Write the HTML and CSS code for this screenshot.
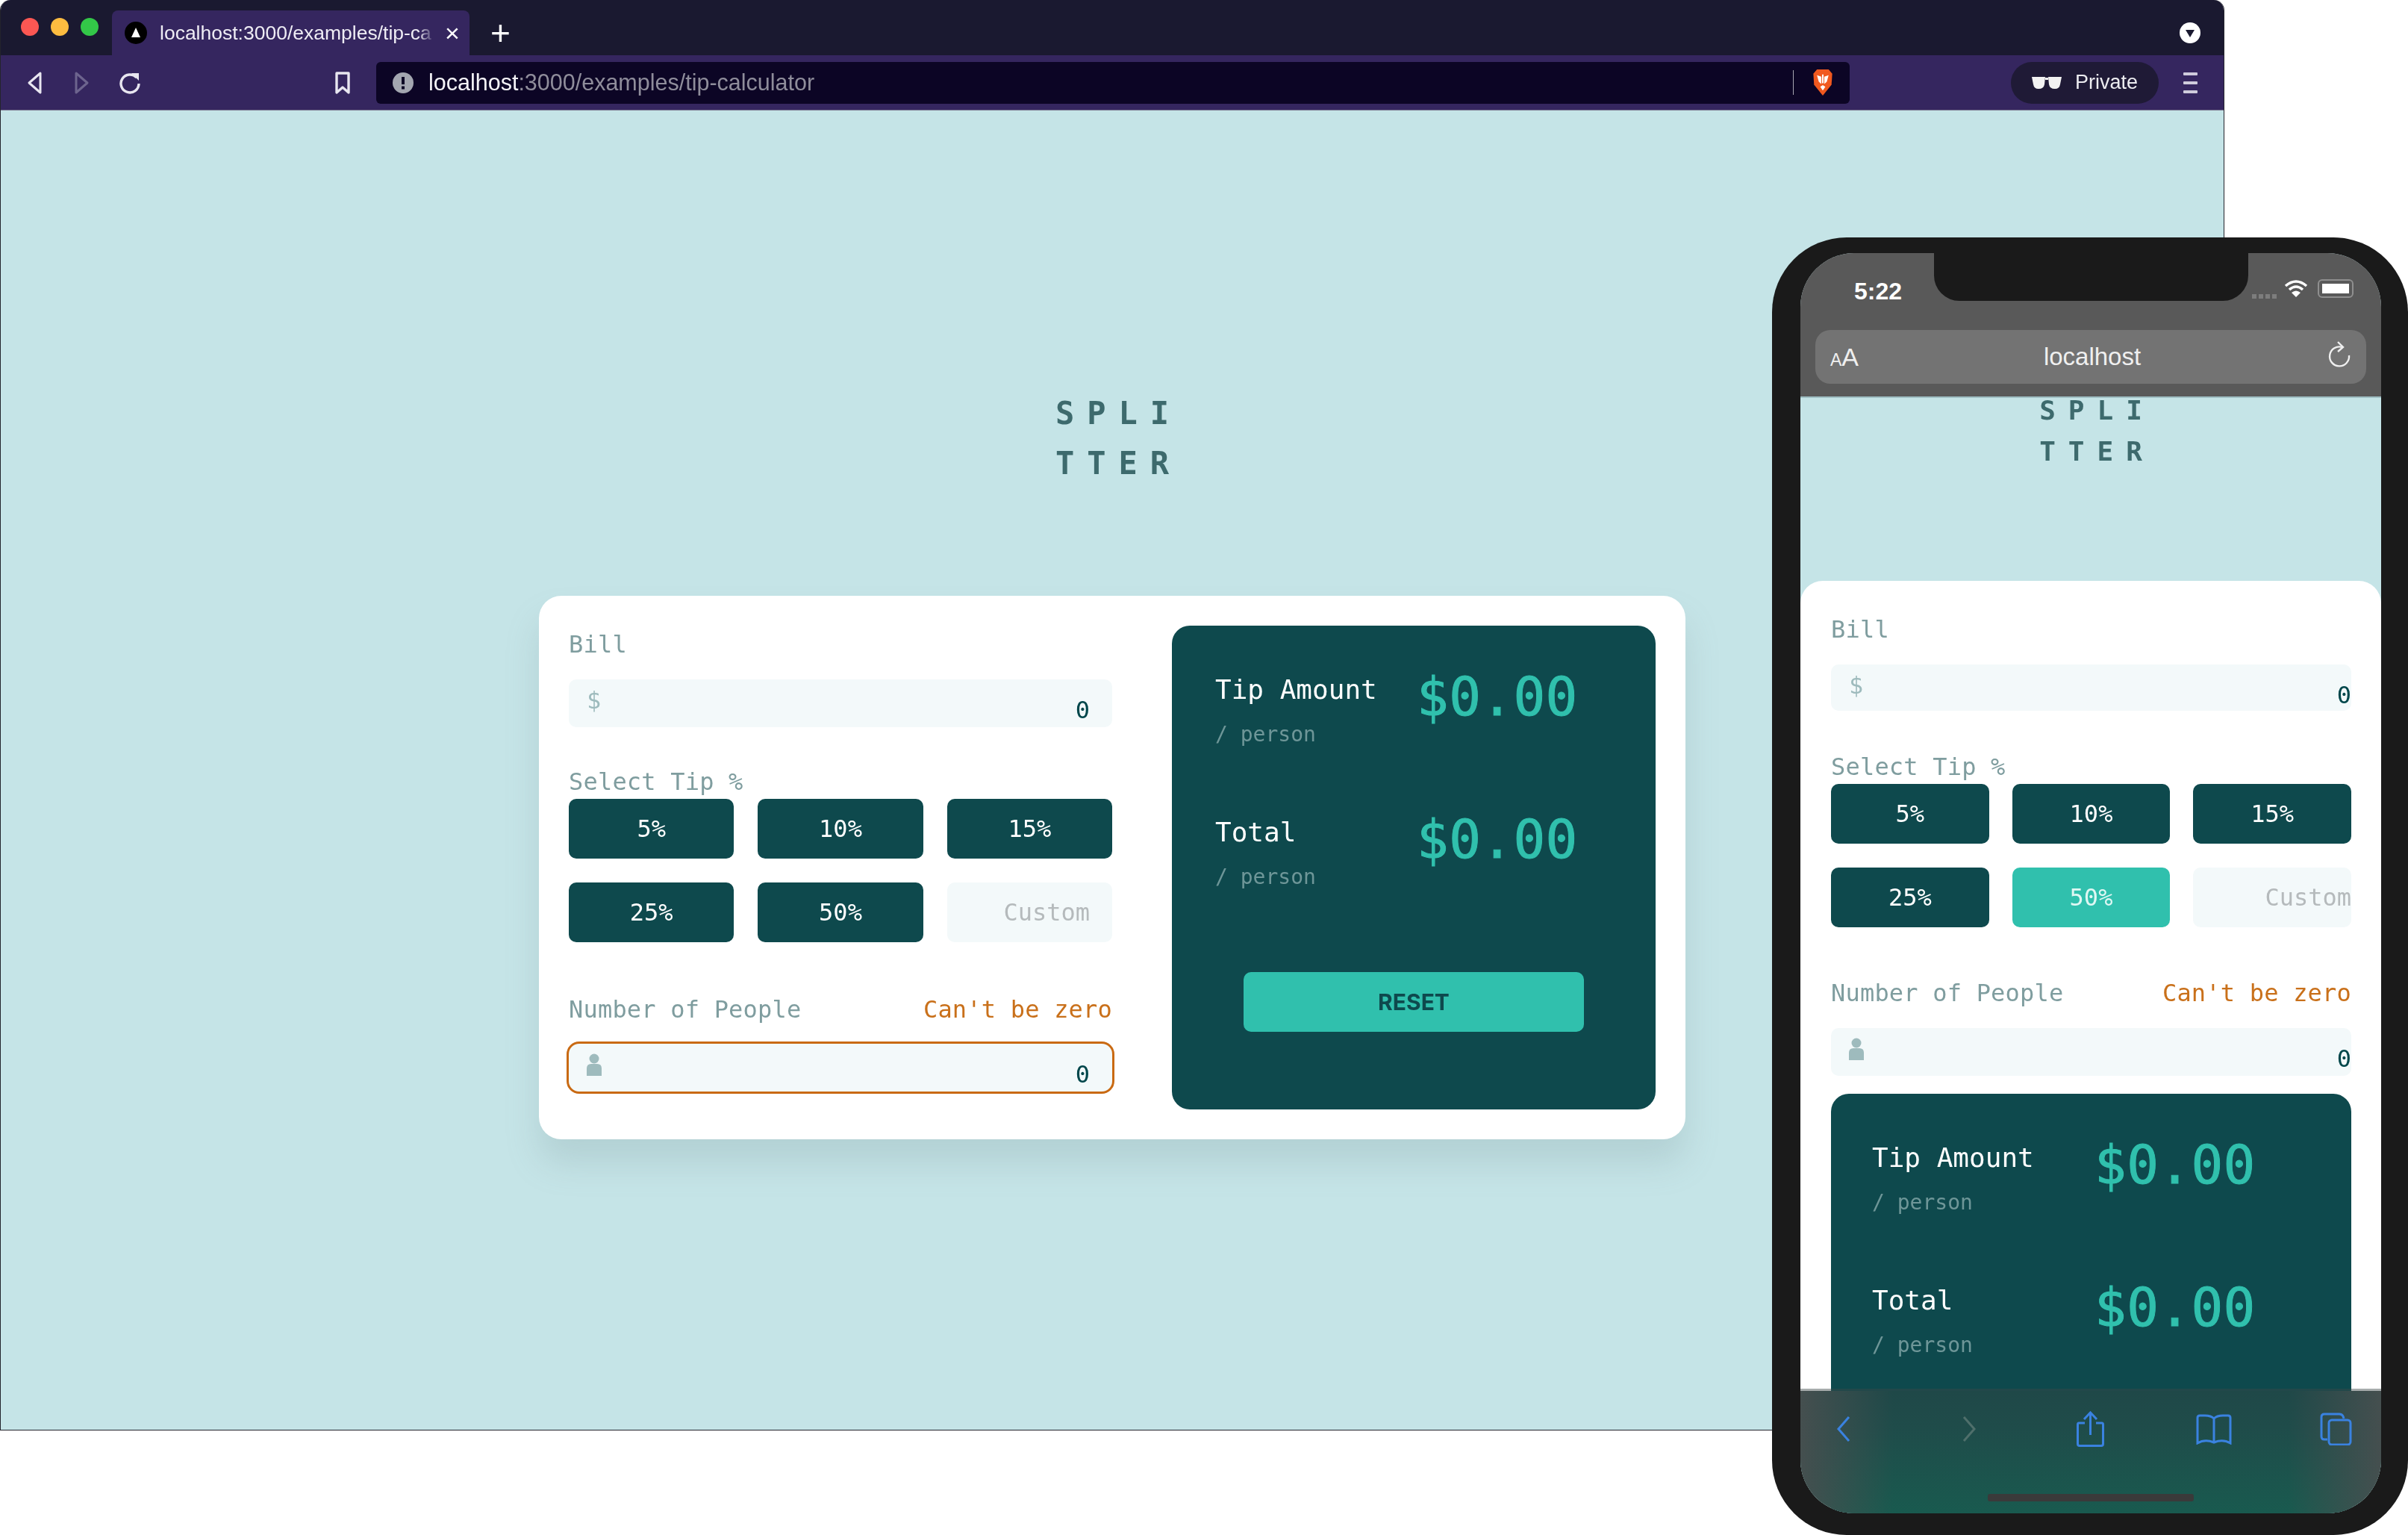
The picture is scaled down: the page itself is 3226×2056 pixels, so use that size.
FILE: index.html
```html
<!DOCTYPE html>
<html lang="en">
<head>
<meta charset="utf-8">
<title>Splitter</title>
<link rel="stylesheet" href="styles.css">
</head>
<body>
<div class="browser">
  <div class="tabstrip">
    <div class="lights"><span class="light red"></span><span class="light yellow"></span><span class="light green"></span></div>
    <div class="tab">
      <svg class="favicon" viewBox="0 0 30 30"><circle cx="15" cy="15" r="15" fill="#000"/><path d="M15 8 L21 21 H9 Z" fill="#fff"/></svg>
      <span class="tab-title">localhost:3000/examples/tip-ca</span>
      <span class="tab-close">×</span>
    </div>
    <span class="tab-new">+</span>
    <svg class="tab-menu" viewBox="0 0 28 28"><circle cx="14" cy="14" r="14" fill="#fff"/><path d="M8 10 H20 L14 20 Z" fill="#1a1930"/></svg>
  </div>
  <div class="toolbar">
    <svg class="ic-back" viewBox="0 0 22 32"><path d="M19 3 L4 16 L19 29 Z" fill="none" stroke="#e8e6f0" stroke-width="3" stroke-linejoin="round"/></svg>
    <svg class="ic-forward" viewBox="0 0 22 32"><path d="M3 3 L18 16 L3 29 Z" fill="none" stroke="#6d648e" stroke-width="3" stroke-linejoin="round"/></svg>
    <svg class="ic-reload" viewBox="0 0 30 32"><path d="M24 9 A12 12 0 1 0 27 17" fill="none" stroke="#e8e6f0" stroke-width="3.4"/><path d="M17 3 L27 3 L27 13 Z" fill="#e8e6f0"/></svg>
    <svg class="ic-bookmark" viewBox="0 0 22 32"><path d="M3 3 H19 V29 L11 22 L3 29 Z" fill="none" stroke="#e8e6f0" stroke-width="3.4" stroke-linejoin="round"/></svg>
    <div class="address">
      <svg class="ic-info" viewBox="0 0 28 28"><circle cx="14" cy="14" r="14" fill="#a3a6b0"/><rect x="12" y="6" width="4" height="10" fill="#0c0525"/><rect x="12" y="18.500" width="4" height="4" fill="#0c0525"/></svg>
      <span class="url"><span class="url-host">localhost</span>:3000/examples/tip-calculator</span>
      <span class="addr-div"></span>
      <svg class="ic-lion" viewBox="0 0 28 38"><path d="M6 1 H22 L27 7 L26 22 L14 37 L2 22 L1 7 Z" fill="#f1591f"/><path d="M6 9 L12 11 V21 L8.500 18 Z M22 9 L16 11 V21 L19.500 18 Z M10.500 25 L14 22.500 L17.500 25 L14 30 Z M13 8 H15 V20 H13 Z" fill="#fff"/></svg>
    </div>
    <div class="private">
      <svg class="ic-glasses" viewBox="0 0 40 18"><path d="M0 1 H18 L17 11 Q16 17 9 17 Q3 17 2 11 Z M22 1 H40 L38 11 Q37 17 31 17 Q24 17 23 11 Z M18 2 H22 V5 H18 Z" fill="#f2f2f2"/></svg>
      <span>Private</span>
    </div>
    <div class="burger"><span></span><span></span><span></span></div>
  </div>
  <main class="page">
    <h1 class="logo"><span>SPLI</span><span>TTER</span></h1>
    <section class="card">
      <div class="form">
        <div class="label label-bill">Bill</div>
        <div class="field"><span class="glyph">$</span><span class="value">0</span></div>
        <div class="label label-tip">Select Tip %</div>
        <div class="tips">
          <button class="tip">5%</button><button class="tip">10%</button><button class="tip">15%</button>
          <button class="tip">25%</button><button class="tip">50%</button><div class="tip tip-custom">Custom</div>
        </div>
        <div class="people-head"><span class="label">Number of People</span><span class="error">Can't be zero</span></div>
        <div class="field field-error">
          <svg class="person" viewBox="0 0 20 30"><circle cx="10" cy="7" r="6.500" fill="#9ebbbd"/><path d="M0 30 V20 Q0 14 6 14 H14 Q20 14 20 20 V30 Z" fill="#9ebbbd"/></svg>
          <span class="value">0</span>
        </div>
      </div>
      <div class="panel">
        <div class="row"><div><div class="row-title">Tip Amount</div><div class="row-sub">/ person</div></div><div class="amount">$0.00</div></div>
        <div class="row"><div><div class="row-title">Total</div><div class="row-sub">/ person</div></div><div class="amount">$0.00</div></div>
        <button class="reset">RESET</button>
      </div>
    </section>
  </main>
</div>

<div class="phone">
  <div class="screen">
    <div class="status">
      <div class="notch"></div>
      <div class="status-row">
        <span class="time">5:22</span>
        <div class="status-icons">
          <span class="signal"><i></i><i></i><i></i><i></i></span>
          <svg class="wifi" viewBox="0 0 32 24"><path d="M2 9 Q16 -3 30 9 M7 14 Q16 6 25 14" fill="none" stroke="#fff" stroke-width="3.500"/><path d="M16 24 L10 18 Q16 13 22 18 Z" fill="#fff"/></svg>
          <span class="battery"><i></i></span>
        </div>
      </div>
      <div class="m-address">
        <span class="m-aa"><small>A</small>A</span>
        <span class="m-host">localhost</span>
        <svg class="m-reload" viewBox="0 0 32 38"><path d="M20 9 A13 13 0 1 0 29 20" fill="none" stroke="#efefef" stroke-width="2.400"/><path d="M14 2 L21 9 L14 15" fill="none" stroke="#efefef" stroke-width="2.400"/></svg>
      </div>
    </div>
    <div class="m-page">
      <h1 class="logo m-logo"><span>SPLI</span><span>TTER</span></h1>
      <section class="m-card">
        <div class="label label-bill">Bill</div>
        <div class="field m-field"><span class="glyph">$</span><span class="value">0</span></div>
        <div class="label label-tip">Select Tip %</div>
        <div class="tips m-tips">
          <button class="tip">5%</button><button class="tip">10%</button><button class="tip">15%</button>
          <button class="tip">25%</button><button class="tip tip-active">50%</button><div class="tip tip-custom m-custom">Custom</div>
        </div>
        <div class="people-head"><span class="label">Number of People</span><span class="error">Can't be zero</span></div>
        <div class="field m-field m-field-people">
          <svg class="person" viewBox="0 0 20 30"><circle cx="10" cy="7" r="6.500" fill="#9ebbbd"/><path d="M0 30 V20 Q0 14 6 14 H14 Q20 14 20 20 V30 Z" fill="#9ebbbd"/></svg>
          <span class="value">0</span>
        </div>
        <div class="panel m-panel">
          <div class="row"><div><div class="row-title">Tip Amount</div><div class="row-sub">/ person</div></div><div class="amount">$0.00</div></div>
          <div class="row"><div><div class="row-title">Total</div><div class="row-sub">/ person</div></div><div class="amount">$0.00</div></div>
        </div>
      </section>
    </div>
    <div class="m-bar">
      <div class="m-icons">
        <svg class="mi mi-back" viewBox="0 0 19 36"><path d="M17 2 L3 18 L17 34" fill="none" stroke="#3a82e0" stroke-width="3"/></svg>
        <svg class="mi mi-forward" viewBox="0 0 19 36"><path d="M2 2 L16 18 L2 34" fill="none" stroke="#4f6f6b" stroke-width="3"/></svg>
        <svg class="mi mi-share" viewBox="0 0 37 48"><path d="M11 16 H3 Q1.500 16 1.500 18 V44 Q1.500 46.500 4 46.500 H33 Q35.500 46.500 35.500 44 V18 Q35.500 16 34 16 H26" fill="none" stroke="#3a82e0" stroke-width="3"/><path d="M18.500 32 V3 M10 11 L18.500 2 L27 11" fill="none" stroke="#3a82e0" stroke-width="3"/></svg>
        <svg class="mi mi-book" viewBox="0 0 48 41"><path d="M24 6 Q20 2 12 2 H5 Q2 2 2 5 V39 Q12 33 24 38 Q36 33 46 39 V5 Q46 2 43 2 H36 Q28 2 24 6 V38" fill="none" stroke="#3a82e0" stroke-width="3"/></svg>
        <svg class="mi mi-tabs" viewBox="0 0 43 44"><path d="M10 36 H6 Q2 36 2 32 V6 Q2 2 6 2 H26 Q31 2 32 8" fill="none" stroke="#3a82e0" stroke-width="3"/><rect x="12" y="10" width="29" height="33" rx="4" fill="none" stroke="#3a82e0" stroke-width="3"/></svg>
      </div>
      <div class="home"></div>
    </div>
  </div>
</div>
</body>
</html>
```
FILE: styles.css
```css
* { box-sizing: border-box; }
html, body { margin: 0; padding: 0; }
body {
  position: relative;
  width: 3226px;
  height: 2056px;
  overflow: hidden;
  background: #fff;
  font-family: "DejaVu Sans Mono", "Liberation Mono", monospace;
}
button { font: inherit; border: 0; padding: 0; }
svg { display: block; flex: none; }

/* Browser window */
.browser {
  position: absolute;
  left: 0;
  top: 0;
  width: 2980px;
  height: 1916px;
  display: flex;
  flex-direction: column;
  border: 1px solid #24242c;
  border-top: 0;
  border-radius: 14px 14px 0 0;
  overflow: hidden;
  filter: blur(0.5px);
  font-family: "Liberation Sans", Arial, sans-serif;
}
.tabstrip {
  height: 74px;
  flex: none;
  display: flex;
  align-items: flex-end;
  background: #1a1930;
}
.lights { display: flex; gap: 16px; margin: 0 0 26px 27px; }
.light { width: 24px; height: 24px; border-radius: 50%; }
.red { background: #fc5753; }
.yellow { background: #fdbc40; }
.green { background: #33c748; }
.tab {
  width: 479px;
  height: 60px;
  margin-left: 18px;
  padding-left: 17px;
  display: flex;
  align-items: center;
  background: #35265f;
  border-radius: 8px 8px 0 0;
  color: #eeecf4;
}
.favicon { width: 30px; height: 30px; }
.tab-title {
  width: 368px;
  margin-left: 17px;
  white-space: nowrap;
  font-size: 26.5px;
  -webkit-mask-image: linear-gradient(90deg, #000 94%, transparent);
  mask-image: linear-gradient(90deg, #000 94%, transparent);
}
.tab-close { margin-left: 14px; font-size: 34px; line-height: 1; color: #fff; }
.tab-new { height: 60px; margin-left: 28px; font-size: 46px; line-height: 60px; color: #fff; }
.tab-menu { width: 28px; height: 28px; margin: 0 31px 16px auto; }

.toolbar {
  height: 74px;
  flex: none;
  display: flex;
  align-items: center;
  background: #35265f;
  border-bottom: 1px solid #7b7891;
}
.ic-back { width: 22px; height: 32px; margin-left: 34px; }
.ic-forward { width: 22px; height: 32px; margin-left: 42px; }
.ic-reload { width: 30px; height: 32px; margin-left: 38px; }
.ic-bookmark { width: 22px; height: 32px; margin-left: 259px; }
.address {
  width: 1974px;
  height: 56px;
  margin-left: 34px;
  padding: 0 22px;
  display: flex;
  align-items: center;
  background: #0c0525;
  border-radius: 6px;
}
.ic-info { width: 28px; height: 28px; }
.url { margin-left: 20px; font-size: 30.5px; color: #8f8d9b; white-space: nowrap; }
.url-host { color: #f4f3f7; }
.addr-div { width: 1px; height: 33px; margin-left: auto; background: #a8a6b2; }
.ic-lion { width: 28px; height: 37px; margin-left: 25px; }
.private {
  width: 198px;
  height: 56px;
  margin-left: 216px;
  padding-left: 28px;
  display: flex;
  align-items: center;
  gap: 18px;
  border-radius: 28px;
  background: #1f1a36;
  color: #ececf0;
  font-size: 27px;
}
.ic-glasses { width: 40px; height: 18px; }
.burger { margin-left: 33px; display: flex; flex-direction: column; gap: 8px; }
.burger span { display: block; width: 19px; height: 4px; border-radius: 1px; background: #cfcbdc; }

/* Splitter page */
.page {
  flex: 1;
  min-height: 0;
  display: flex;
  flex-direction: column;
  align-items: center;
  background: #c5e4e7;
  font-family: "DejaVu Sans Mono", "Liberation Mono", monospace;
}
.logo {
  margin: 372px 0 0;
  font-size: 42px;
  line-height: 67px;
  font-weight: 700;
  letter-spacing: 17px;
  color: #3d6a6d;
  white-space: nowrap;
  padding-left: 17px;
}
.logo span { display: block; }
.card {
  width: 1536px;
  height: 728px;
  margin-top: 144px;
  padding: 40px;
  display: grid;
  grid-template-columns: 728px 648px;
  column-gap: 80px;
  background: #fff;
  border-radius: 30px;
  box-shadow: 0 32px 43px rgba(127, 156, 159, 0.25);
}
.form { min-width: 0; }
.label { font-size: 32px; letter-spacing: 0.2px; color: #7f9d9f; white-space: nowrap; }
.label-bill { height: 50px; line-height: 50px; margin-bottom: 22px; }
.label-tip { height: 46px; line-height: 46px; margin-top: 50px; }
.field {
  height: 64px;
  padding: 0 30px 0 24px;
  display: flex;
  justify-content: space-between;
  background: #f3f9fa;
  border-radius: 10px;
}
.glyph { height: 56px; font-size: 32px; line-height: 56px; color: #9ebbbd; }
.value { height: 55px; margin-top: 9px; font-size: 32px; line-height: 64px; color: #00474b; }
.person { width: 20px; height: 30px; margin: 13px 0 0 0; }
.field-error { margin-top: 20px; outline: 3.5px solid #c96a13; border-radius: 14px; }
.tips {
  display: grid;
  grid-template-columns: repeat(3, 1fr);
  grid-auto-rows: 80px;
  gap: 32px;
}
.tip {
  display: flex;
  align-items: center;
  justify-content: center;
  background: #0e494d;
  border-radius: 10px;
  color: #fff;
  font-size: 32px;
}
.tip-active { background: #30c0ad; color: #dff7f3; }
.tip-custom {
  justify-content: flex-end;
  padding-right: 30px;
  background: #f3f9fa;
  color: #b5babc;
}
.people-head {
  height: 52px;
  margin-top: 64px;
  display: flex;
  align-items: center;
  justify-content: space-between;
  line-height: 52px;
}
.error { font-size: 32px; letter-spacing: 0.2px; color: #c9701a; white-space: nowrap; }

.panel {
  --label-col: 270px;
  height: 648px;
  padding: 66px 0 0 58px;
  background: #0e494d;
  border-radius: 24px;
}
.row {
  display: grid;
  grid-template-columns: var(--label-col) auto;
  justify-content: start;
  height: 100px;
  margin-bottom: 91px;
}
.row-title { height: 40px; font-size: 36px; line-height: 40px; color: #fff; white-space: nowrap; }
.row-sub { height: 40px; margin-top: 20px; font-size: 28px; line-height: 40px; color: #6e9698; white-space: nowrap; }
.amount {
  height: 80px;
  margin-top: -10px;
  font-size: 71px;
  line-height: 80px;
  letter-spacing: 0.4px;
  color: #30c0ad;
  white-space: nowrap;
  -webkit-text-stroke: 1px #30c0ad;
}
.reset {
  display: block;
  width: 456px;
  height: 80px;
  margin: 107px 0 0 38px;
  background: #30c0ad;
  border-radius: 10px;
  font-family: Inter, "Liberation Sans", sans-serif;
  font-weight: 700;
  font-size: 30px;
  color: #0e494d;
}

/* Phone */
.phone {
  position: absolute;
  left: 2374px;
  top: 318px;
  width: 852px;
  height: 1738px;
  padding: 21px 36px 29px 38px;
  background: #1a1a1a;
  border-radius: 100px;
  filter: blur(0.6px);
}
.screen {
  height: 100%;
  display: flex;
  flex-direction: column;
  overflow: hidden;
  border-radius: 72px;
  background: #c5e4e7;
}
.status {
  position: relative;
  z-index: 1;
  height: 194px;
  flex: none;
  padding-top: 34px;
  background: #595959;
  border-bottom: 2px solid #9fc0c4;
  font-family: "Liberation Sans", Arial, sans-serif;
  color: #fff;
}
.notch {
  position: absolute;
  left: 179px;
  top: 0;
  width: 421px;
  height: 64px;
  background: #1a1a1a;
  border-radius: 0 0 34px 34px;
}
.status-row {
  height: 34px;
  padding: 0 37px 0 72px;
  display: flex;
  align-items: center;
  justify-content: space-between;
}
.time { font-size: 32px; font-weight: 700; }
.status-icons { display: flex; align-items: center; }
.signal { display: flex; gap: 3px; margin-right: 10px; padding-top: 14px; }
.signal i { width: 6px; height: 6px; background: #7d7d7d; }
.wifi { width: 32px; height: 24px; margin-right: 13px; margin-top: -8px; }
.battery {
  width: 48px;
  height: 25px;
  margin-top: -8px;
  padding: 4px;
  border: 2px solid #8f8f8f;
  border-radius: 6px;
}
.battery i { display: block; height: 100%; background: #fff; }
.m-address {
  height: 72px;
  margin: 35px 20px 0;
  padding: 0 20px;
  display: flex;
  align-items: center;
  justify-content: space-between;
  background: #737373;
  border-radius: 20px;
}
.m-aa { font-size: 34px; color: #efefef; line-height: 1; }
.m-aa small { font-size: 23px; }
.m-host { font-size: 33px; color: #efefef; margin-left: -2px; }
.m-reload { width: 32px; height: 38px; margin-top: -6px; }

.m-page { flex: 1; min-height: 0; }
.m-logo {
  margin: 0;
  padding-top: 2px;
  font-size: 36px;
  line-height: 30px;
  letter-spacing: 17px;
  text-align: center;
  padding-left: 17px;
}
.m-logo span + span { margin-top: 25px; }
.m-card {
  margin-top: 158px;
  padding: 40px 40px 0 41px;
  background: #fff;
  border-radius: 30px 30px 0 0;
}
.m-card .label-tip { margin-top: 52px; }
.m-card .people-head { margin-top: 62px; }
.m-field { padding-right: 0; height: 62px; }
.m-field-people { height: 64px; margin-top: 21px; }
.m-custom { padding-right: 0; }
.m-tips { column-gap: 31px; }
.m-panel { --label-col: 298px; margin-top: 24px; padding-left: 55px; }

.m-bar {
  position: relative;
  z-index: 1;
  height: 164px;
  flex: none;
  padding-top: 27px;
  box-shadow: 0 -3px 0 rgba(60, 70, 70, 0.45);
  background:
    linear-gradient(90deg, #454f4f 0, rgba(69, 79, 79, 0) 16%, rgba(69, 79, 79, 0) 84%, #454f4f 100%),
    linear-gradient(180deg, #1f4848 0, #1f4c4a 30%, #195a4f 100%);
}
.m-icons { height: 48px; padding-left: 48px; display: flex; align-items: center; }
.mi-back { width: 19px; height: 36px; }
.mi-forward { width: 19px; height: 36px; margin-left: 150px; }
.mi-share { width: 37px; height: 48px; margin-left: 134px; }
.mi-book { width: 48px; height: 41px; margin-left: 123px; }
.mi-tabs { width: 43px; height: 44px; margin-left: 118px; }
.home {
  width: 276px;
  height: 10px;
  margin: 63px auto 0;
  background: #3a3a3a;
  border-radius: 3px;
}
```
